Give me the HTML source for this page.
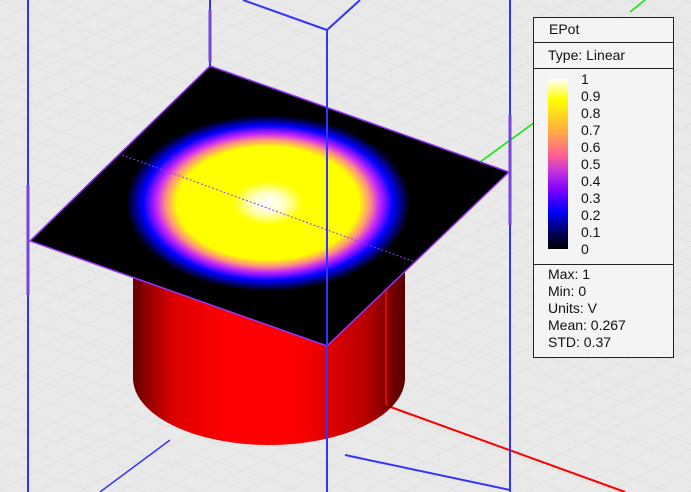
<!DOCTYPE html>
<html><head><meta charset="utf-8"><style>
body{margin:0;width:691px;height:492px;overflow:hidden;background:#e9e9e9;font-family:"Liberation Sans",sans-serif}
#lg{position:absolute;left:533px;top:17px;width:139px;height:339px;background:#f4f4f4;border:1px solid #222;font-size:14px;color:#111}
.r{border-bottom:1px solid #222;box-sizing:border-box}
</style></head><body>
<svg width="691" height="492" style="position:absolute;left:0;top:0">
<defs>
<pattern id="g" width="24" height="24" patternUnits="userSpaceOnUse" patternTransform="matrix(1,0.35,-0.9,0.45,0,0)">
<path d="M0 0H24M0 0V24" stroke="#d6d6d6" stroke-width="1" fill="none"/>
</pattern>
<radialGradient id="rg" cx="0.5" cy="0.5" r="0.5">
<stop offset="0" stop-color="#fff"/>
<stop offset="0.12" stop-color="#ffffc0"/>
<stop offset="0.25" stop-color="#ffff00"/>
<stop offset="0.64" stop-color="#ffff00"/>
<stop offset="0.72" stop-color="#ff9080"/>
<stop offset="0.79" stop-color="#c020ff"/>
<stop offset="0.88" stop-color="#0000ff"/>
<stop offset="1" stop-color="#000"/>
</radialGradient>
<linearGradient id="cy" x1="0" x2="1">
<stop offset="0" stop-color="#600"/>
<stop offset="0.15" stop-color="#d00"/>
<stop offset="0.35" stop-color="#f00"/>
<stop offset="0.6" stop-color="#f00"/>
<stop offset="0.85" stop-color="#b00"/>
<stop offset="1" stop-color="#500"/>
</linearGradient>
<clipPath id="pc"><polygon points="210,66 509,172 327,346 30,241"/></clipPath>
</defs>
<rect width="691" height="492" fill="url(#g)"/>
<line x1="385" y1="405" x2="625" y2="492" stroke="#f00" stroke-width="2"/>
<line x1="345" y1="455" x2="510" y2="490" stroke="#3333ff" stroke-width="2"/>
<line x1="170" y1="440" x2="100" y2="492" stroke="#3333ff" stroke-width="1.5"/>
<line x1="480" y1="162" x2="535" y2="122" stroke="#00ee00" stroke-width="1.5"/>
<line x1="630" y1="12" x2="645" y2="0" stroke="#00ee00" stroke-width="1.5"/>
<path d="M133 270 V378 A136 67 0 0 0 405 378 V270 Z" fill="url(#cy)"/>
<line x1="386" y1="290" x2="386" y2="405" stroke="#f00" stroke-width="1.5"/>
<polygon points="210,66 509,172 327,346 30,241" fill="#000" stroke="#9933ff" stroke-width="1.5"/>
<g clip-path="url(#pc)">
<ellipse cx="268" cy="203" rx="142" ry="88" fill="url(#rg)"/>
</g>
<line x1="122" y1="155" x2="415" y2="262" stroke="#9933ff" stroke-width="1" stroke-dasharray="2,2"/>
<line x1="28" y1="0" x2="28" y2="492" stroke="#3333ff" stroke-width="2"/>
<line x1="210" y1="0" x2="210" y2="66" stroke="#3333ff" stroke-width="2"/>
<line x1="327" y1="30" x2="327" y2="492" stroke="#3333ff" stroke-width="2"/>
<line x1="510" y1="0" x2="510" y2="492" stroke="#3333ff" stroke-width="2"/>
<line x1="243" y1="0" x2="327" y2="30" stroke="#3333ff" stroke-width="2"/>
<line x1="327" y1="30" x2="360" y2="0" stroke="#3333ff" stroke-width="2"/>
<line x1="210" y1="10" x2="210" y2="62" stroke="#7744dd" stroke-width="3"/>
<line x1="28" y1="185" x2="28" y2="295" stroke="#7744dd" stroke-width="3"/>
<line x1="510" y1="115" x2="510" y2="225" stroke="#7744dd" stroke-width="3"/>
</svg>
<div id="lg">
<div class="r" style="height:25px;padding:3px 0 0 15px">EPot</div>
<div class="r" style="height:26px;padding:4px 0 0 14px">Type: Linear</div>
<div class="r" style="height:196px;position:relative">
<div style="position:absolute;left:14px;top:10px;width:20px;height:170px;background:linear-gradient(#fff,#ffff00 12%,#ffb040 30%,#ff6090 45%,#c030e0 55%,#8000ff 65%,#0000ff 78%,#000060 90%,#000)"></div>
<div style="position:absolute;left:47px;top:2px;line-height:17px">1<br>0.9<br>0.8<br>0.7<br>0.6<br>0.5<br>0.4<br>0.3<br>0.2<br>0.1<br>0</div>
</div>
<div style="padding:1px 0 0 14px;line-height:17px">Max: 1<br>Min: 0<br>Units: V<br>Mean: 0.267<br>STD: 0.37</div>
</div>
</body></html>
